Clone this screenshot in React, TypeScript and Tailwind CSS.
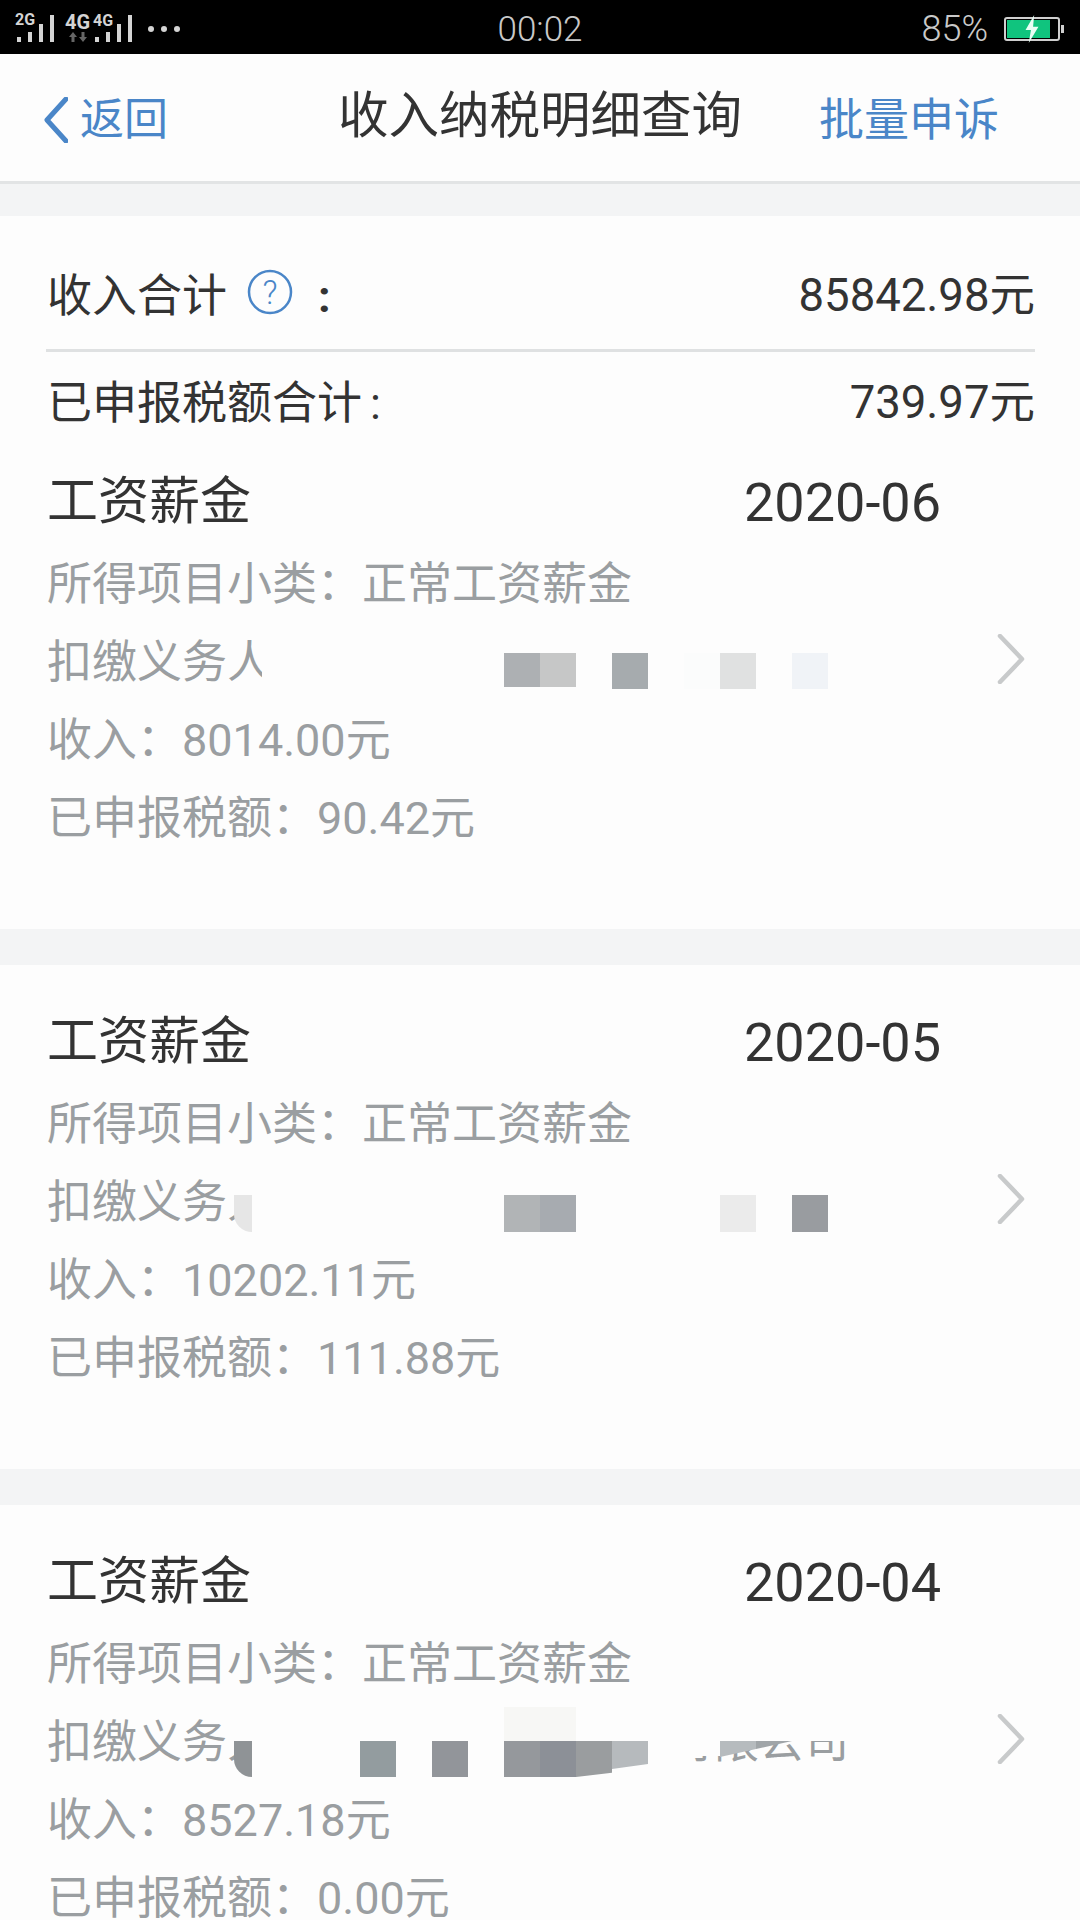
const blue = 'text-[#4a86c8]';

type Patch = { cls: string };

// mosaic blocks laid over the payer row (each row is 78px tall)
const mosaic1: Patch[] = [
  { cls: 'left-[262px] top-0 w-[540px] h-[78px] bg-[#fdfdfd]' },
  { cls: 'left-[504px] top-[30px] w-[36px] h-[34px] bg-[#adb0b3]' },
  { cls: 'left-[540px] top-[30px] w-[36px] h-[34px] bg-[#c6c7c7]' },
  { cls: 'left-[612px] top-[30px] w-[36px] h-[36px] bg-[#a6abae]' },
  { cls: 'left-[684px] top-[30px] w-[36px] h-[36px] bg-[#fbfcfc]' },
  { cls: 'left-[720px] top-[30px] w-[36px] h-[36px] bg-[#e0e1e1]' },
  { cls: 'left-[792px] top-[30px] w-[36px] h-[36px] bg-[#f0f3f7]' },
];

const mosaic2: Patch[] = [
  { cls: 'left-[234px] top-[32px] w-[18px] h-[37px] bg-[#e6e6e6] rounded-bl-[18px]' },
  { cls: 'left-[252px] top-0 w-[560px] h-[78px] bg-[#fdfdfd]' },
  { cls: 'left-[234px] top-0 w-[18px] h-[32px] bg-[#fdfdfd]' },
  { cls: 'left-[504px] top-[32px] w-[36px] h-[37px] bg-[#b1b4b6]' },
  { cls: 'left-[540px] top-[32px] w-[36px] h-[37px] bg-[#a7abb0]' },
  { cls: 'left-[720px] top-[32px] w-[36px] h-[37px] bg-[#ebebeb]' },
  { cls: 'left-[792px] top-[32px] w-[36px] h-[37px] bg-[#999ca0]' },
];

const mosaic3: Patch[] = [
  { cls: 'left-[234px] top-0 w-[618px] h-[38px] bg-[#fdfdfd]' },
  { cls: 'left-[252px] top-[38px] w-[436px] h-[40px] bg-[#fdfdfd]' },
  { cls: 'left-[688px] top-[38px] w-[32px] h-[15px] bg-[#fdfdfd]' },
  { cls: 'left-[234px] top-[38px] w-[18px] h-[36px] bg-[#8f9396] rounded-bl-[18px]' },
  { cls: 'left-[360px] top-[38px] w-[36px] h-[36px] bg-[#939c9f]' },
  { cls: 'left-[432px] top-[38px] w-[36px] h-[36px] bg-[#92959a]' },
  { cls: 'left-[504px] top-[4px] w-[72px] h-[34px] bg-[#f7f7f5]' },
  { cls: 'left-[504px] top-[38px] w-[36px] h-[36px] bg-[#95989c]' },
  { cls: 'left-[540px] top-[38px] w-[36px] h-[36px] bg-[#8c9097]' },
  { cls: 'left-[576px] top-[38px] w-[36px] h-[36px] bg-[#9a9d9f] [clip-path:polygon(0_0,100%_0,100%_88%,0_100%)]' },
  { cls: 'left-[612px] top-[38px] w-[36px] h-[28px] bg-[#b6babd] [clip-path:polygon(0_0,100%_0,100%_82%,0_100%)]' },
  { cls: 'left-[720px] top-[38px] w-[36px] h-[16px] bg-[#b6bbbe] [clip-path:polygon(0_0,100%_0,100%_50%,0_100%)]' },
  { cls: 'left-[756px] top-[38px] w-[36px] h-[8px] bg-[#a0a5a8] [clip-path:polygon(0_0,100%_0,0_100%)]' },
];

function StatusIcons() {
  return (
    <svg width="200" height="54" viewBox="0 0 200 54" className="block">
      <g fill="#d4d4d4">
        <text x="15" y="23" fontSize="16" fontWeight="700" fontFamily="Roboto">2G</text>
        <rect x="17" y="35" width="4" height="5" />
        <rect x="28" y="30" width="4" height="10" />
        <rect x="39" y="22" width="4" height="18" />
        <rect x="50" y="13" width="4" height="27" />
        <text x="65" y="27" fontSize="20" fontWeight="700" fontFamily="Roboto">4G</text>
        <text x="93" y="24" fontSize="16" fontWeight="700" fontFamily="Roboto">4G</text>
        <rect x="95" y="35" width="4" height="5" />
        <rect x="106" y="30" width="4" height="10" />
        <rect x="117" y="22" width="4" height="18" />
        <rect x="128" y="13" width="4" height="27" />
        <circle cx="151" cy="27" r="3" />
        <circle cx="164" cy="27" r="3" />
        <circle cx="177" cy="27" r="3" />
      </g>
      <path d="M73 30l-4 5h2.500v5h3v-5H77zM83 40l4-5h-2.500v-5h-3v5H79z" fill="#666" />
    </svg>
  );
}

function Battery() {
  return (
    <div className="relative w-[56px] h-[24px] border-2 border-[#cfcfcf] rounded-[3px] p-[1px] ml-[16px] mr-[20px]">
      <div className="w-[43px] h-full bg-[#10c47e]" />
      <div className="absolute -right-[6px] top-[6px] w-[3px] h-[8px] bg-[#cfcfcf]" />
      <svg width="18" height="28" viewBox="0 0 16 26" className="absolute left-[17px] -top-[4px]">
        <path d="M10 0L2 14h5L5 26l9-15H9z" fill="#e8fff5" />
      </svg>
    </div>
  );
}

function StatusBar() {
  return (
    <div className="grid grid-cols-3 items-center h-[54px] bg-black">
      <StatusIcons />
      <div className="text-center text-[35px] leading-[54px] pt-[3px] font-light text-[#c9c9c9]">00:02</div>
      <div className="flex items-center justify-end text-[36px] font-light text-[#c9c9c9]">
        85%
        <Battery />
      </div>
    </div>
  );
}

function NavBar() {
  return (
    <div className="relative flex items-center justify-between h-[130px] pt-[4px] pl-[44px] pr-[81px] bg-[#fdfdfd] border-b-[3px] border-[#e2e4e5]">
      <div className={`flex items-center ${blue} text-[44px]`}>
        <svg width="24" height="46" viewBox="0 0 24 46" fill="none" className="mr-[12px]">
          <path d="M22 2L3 23l19 21" stroke="#4a86c8" strokeWidth="5" strokeLinecap="round" strokeLinejoin="round" />
        </svg>
        返回
      </div>
      <div className="absolute left-[338px] top-[30px] text-[50.500px] leading-[64px] text-[#333]">收入纳税明细查询</div>
      <div className={`${blue} text-[45px] pt-[3px]`}>批量申诉</div>
    </div>
  );
}

function Summary() {
  return (
    <div className="pl-[46px] pr-[45px] pt-[47px]">
      <div className="flex items-center justify-between h-[64px] pt-[3px] pl-[1px] text-[#333] text-[45px]">
        <div className="flex items-center">
          收入合计
          <svg width="46" height="46" viewBox="0 0 46 46" className="ml-[20px] -mt-[9px]">
            <circle cx="23" cy="23" r="21" fill="none" stroke="#4a86c8" strokeWidth="2.500" />
            <text x="23" y="35" textAnchor="middle" fontSize="33" fontWeight="300" fontFamily="Roboto" fill="#4a86c8">?</text>
          </svg>
          <span className="ml-[25px] font-bold">:</span>
        </div>
        <div className="text-[45.500px]">85842.98元</div>
      </div>
      <div className="h-[3px] mt-[22px] bg-[#dfe1e2]" />
      <div className="flex items-center justify-between h-[64px] pt-[3px] mt-[18px] pl-[1px] text-[#333] text-[45px]">
        <div>已申报税额合计<span className="ml-[8px]">:</span></div>
        <div className="text-[45.500px]">739.97元</div>
      </div>
    </div>
  );
}

function Chevron() {
  return (
    <svg width="28" height="50" viewBox="0 0 28 50" fill="none" className="ml-auto -mt-[8px]">
      <path d="M3 2l22 23L3 48" stroke="#c8cacb" strokeWidth="4.500" strokeLinecap="round" strokeLinejoin="round" />
    </svg>
  );
}

function Item({ month, income, tax, patches, company, className }: {
  month: string;
  income: string;
  tax: string;
  patches: Patch[];
  company?: boolean;
  className: string;
}) {
  return (
    <div className={className}>
      <div className="flex items-center h-[64px] pt-[2px] pl-[47px] text-[51px] text-[#333]">
        <div>工资薪金</div>
        <div className="absolute left-[744px] text-[54px]">{month}</div>
      </div>
      <div className="mt-[12px] text-[45px] text-[#9a9ea1]">
        <div className="flex items-center h-[78px] pt-[2px] pl-[47px]">所得项目小类：正常工资薪金</div>
        <div className="relative flex items-center h-[78px] pt-[2px] pl-[47px] pr-[55px]">
          扣缴义务人
          {company && <span className="ml-[397px]">有限公司</span>}
          {patches.map((p, i) => (
            <div key={i} className={`absolute ${p.cls}`} />
          ))}
          <Chevron />
        </div>
        <div className="flex items-center h-[78px] pt-[2px] pl-[47px]">收入：{income}元</div>
        <div className="flex items-center h-[78px] pt-[2px] pl-[47px]">已申报税额：{tax}元</div>
      </div>
    </div>
  );
}

export default function App() {
  return (
    <div className="w-[1080px] h-[1920px] overflow-hidden bg-[#f3f4f5] font-['Roboto','Noto_Sans_CJK_SC',sans-serif]">
      <StatusBar />
      <NavBar />
      <div className="mt-[32px] bg-[#fdfdfd]">
        <Summary />
        <Item className="relative pt-[35px] pb-[72px]" month="2020-06" income="8014.00" tax="90.42" patches={mosaic1} />
      </div>
      <div className="mt-[36px] bg-[#fdfdfd]">
        <Item className="relative pt-[44px] pb-[72px]" month="2020-05" income="10202.11" tax="111.88" patches={mosaic2} />
      </div>
      <div className="mt-[36px] bg-[#fdfdfd]">
        <Item className="relative pt-[44px] pb-[72px]" month="2020-04" income="8527.18" tax="0.00" patches={mosaic3} company />
      </div>
    </div>
  );
}
